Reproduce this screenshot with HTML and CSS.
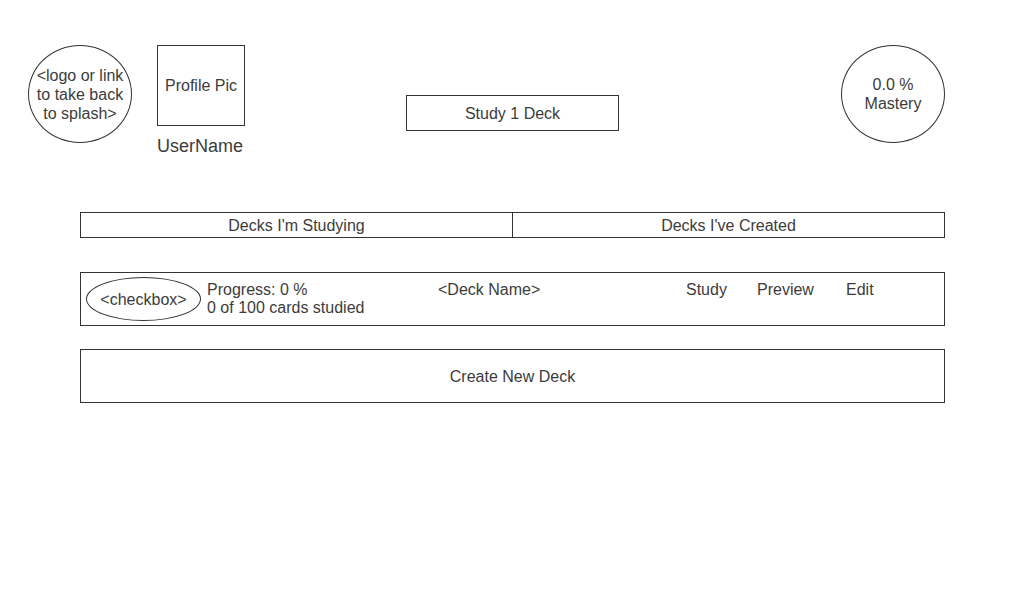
FILE: index.html
```html
<!DOCTYPE html>
<html>
<head>
<meta charset="utf-8">
<link rel="stylesheet" href="styles.css">
</head>
<body>
<header class="header">
  <a class="logo circle">&lt;logo or link<br>to take back<br>to splash&gt;</a>
  <div class="profile">
    <div class="profile-pic">Profile Pic</div>
    <div class="username">UserName</div>
  </div>
  <button class="study-btn">Study 1 Deck</button>
  <div class="mastery circle">0.0 %<br>Mastery</div>
</header>
<main class="main">
  <div class="tabs">
    <div class="tab">Decks I'm Studying</div>
    <div class="tab">Decks I've Created</div>
  </div>
  <div class="deck-row">
    <div class="checkbox">&lt;checkbox&gt;</div>
    <div class="deck-info">
      <div class="progress">Progress: 0 %<br>0 of 100 cards studied</div>
      <div class="deck-name">&lt;Deck Name&gt;</div>
      <div class="action action-study">Study</div>
      <div class="action action-preview">Preview</div>
      <div class="action">Edit</div>
    </div>
  </div>
  <div class="create">Create New Deck</div>
</main>
</body>
</html>
```
FILE: styles.css
```css
* { box-sizing: border-box; }
body {
  margin: 0;
  background: #fff;
  color: #3c3c3c;
  font-family: "Liberation Sans", Arial, sans-serif;
  font-size: 16px;
  line-height: 19px;
}
.header {
  display: flex;
  align-items: flex-start;
  padding: 45px 0 0 28px;
}
.circle {
  width: 104px;
  height: 98px;
  border: 1px solid #333;
  border-radius: 50%;
  display: flex;
  align-items: center;
  justify-content: center;
  text-align: center;
  color: #3c3c3c;
  text-decoration: none;
}
.profile {
  margin-left: 25px;
  display: flex;
  flex-direction: column;
}
.profile-pic {
  width: 88px;
  height: 81px;
  border: 1px solid #333;
  display: flex;
  align-items: center;
  justify-content: center;
}
.username {
  margin-top: 10px;
  font-size: 18px;
  line-height: 21px;
}
.study-btn {
  margin: 50px 0 0 161px;
  width: 213px;
  height: 36px;
  border: 1px solid #333;
  background: #fff;
  color: #3c3c3c;
  font: inherit;
  padding: 0;
}
.mastery { margin-left: 222px; }
.main {
  width: 865px;
  margin: 55px 0 0 80px;
}
.tabs {
  display: flex;
  height: 26px;
  border: 1px solid #333;
}
.tab {
  flex: 1;
  display: flex;
  align-items: center;
  justify-content: center;
}
.tab + .tab { border-left: 1px solid #333; }
.deck-row {
  margin-top: 34px;
  height: 54px;
  border: 1px solid #333;
  display: flex;
  align-items: center;
  padding-left: 5px;
}
.checkbox {
  width: 115px;
  height: 44px;
  border: 1px solid #333;
  border-radius: 50%;
  display: flex;
  align-items: center;
  justify-content: center;
}
.deck-info {
  display: flex;
  align-items: flex-start;
  margin-left: 6px;
  line-height: 18px;
}
.progress { width: 231px; }
.deck-name { width: 248px; }
.action-study { width: 71px; }
.action-preview { width: 89px; }
.create {
  margin-top: 23px;
  height: 54px;
  border: 1px solid #333;
  display: flex;
  align-items: center;
  justify-content: center;
}
```
